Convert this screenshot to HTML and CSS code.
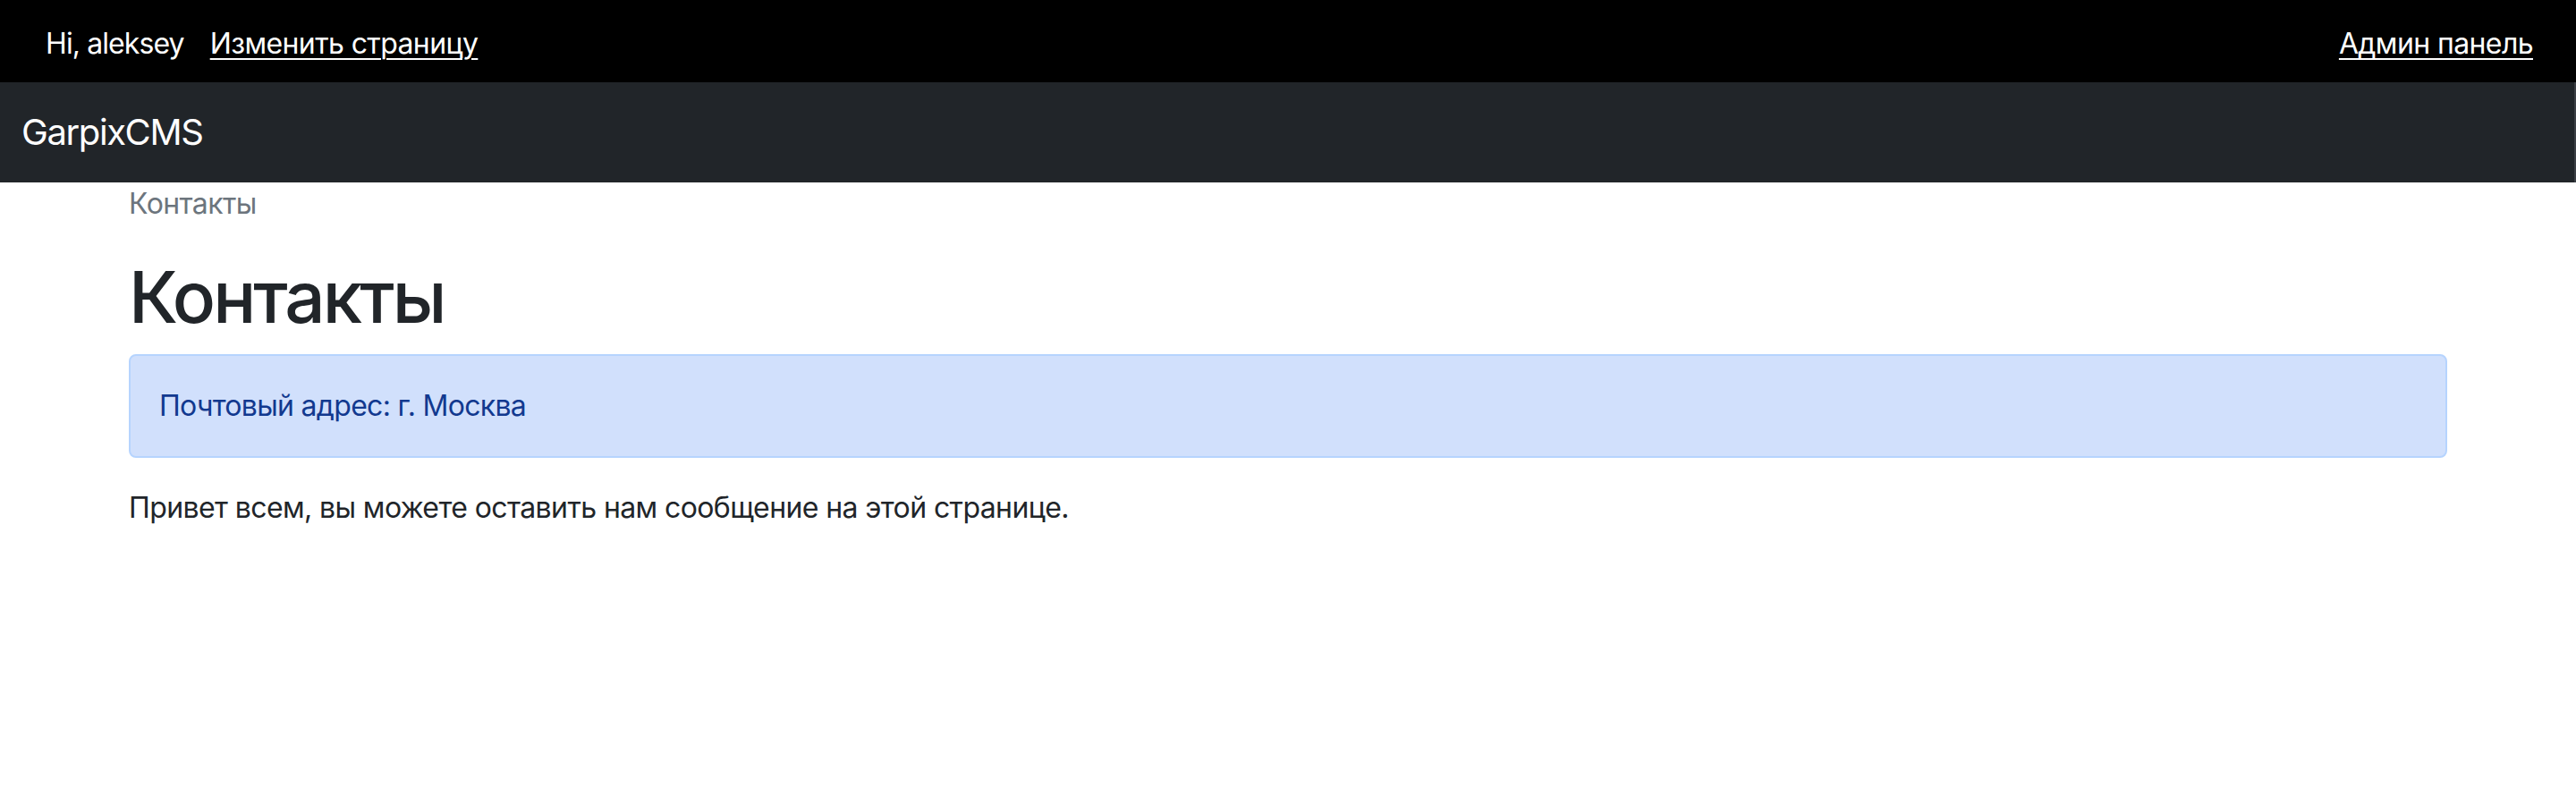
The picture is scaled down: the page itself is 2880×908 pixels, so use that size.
FILE: index.html
```html
<!DOCTYPE html>
<html lang="ru">
<head>
<meta charset="utf-8">
<title>Контакты</title>
<link rel="stylesheet" href="styles.css">
</head>
<body>
<div class="topbar">
  <div class="topbar-left">
    <span class="hello">Hi, aleksey</span>
    <a class="top-link" href="#">Изменить страницу</a>
  </div>
  <a class="top-link" href="#">Админ панель</a>
</div>
<nav class="navbar">
  <a class="brand" href="#">GarpixCMS</a>
</nav>
<main class="container">
  <div class="breadcrumb">Контакты</div>
  <h1 class="title">Контакты</h1>
  <div class="alert">Почтовый адрес: г. Москва</div>
  <p class="text">Привет всем, вы можете оставить нам сообщение на этой странице.</p>
</main>
</body>
</html>
```
FILE: styles.css
```css
* { box-sizing: border-box; }
html, body { margin: 0; padding: 0; }
body {
  font-family: "Inter", "Liberation Sans", sans-serif;
  font-size: 32px;
  line-height: 48px;
  letter-spacing: -0.6px;
  color: #212529;
  background: #fff;
}
.topbar {
  height: 92px;
  background: #000;
  display: flex;
  align-items: center;
  justify-content: space-between;
  padding: 6px 48px 0 51px;
  color: #fff;
}
.topbar-left { display: flex; align-items: center; gap: 29px; }
.hello { letter-spacing: -0.9px; }
.top-link { color: #fff; text-decoration: underline; text-underline-offset: 5px; text-decoration-thickness: 2px; }
.navbar {
  height: 112px;
  background: #212529;
  display: flex;
  align-items: center;
  padding: 0 24px;
  border-right: 2px solid #3a3e44;
}
.brand {
  color: #fff;
  text-decoration: none;
  font-size: 40px;
  line-height: 60px;
  letter-spacing: -1.4px;
}
.container {
  max-width: 2640px;
  margin: 0 auto;
  padding: 0 24px;
}
.breadcrumb {
  color: #6c757d;
  margin-bottom: 32px;
}
.title {
  margin: 0 0 16px;
  font-size: 80px;
  line-height: 96px;
  font-weight: 500;
  letter-spacing: -3px;
}
.alert {
  background: #d1e0fc;
  border: 2px solid #b6d4fe;
  color: #12398f;
  border-radius: 8px;
  padding: 32px 32px;
  margin-bottom: 32px;
  letter-spacing: -0.7px;
}
.text { margin: 0 0 32px; }
```
